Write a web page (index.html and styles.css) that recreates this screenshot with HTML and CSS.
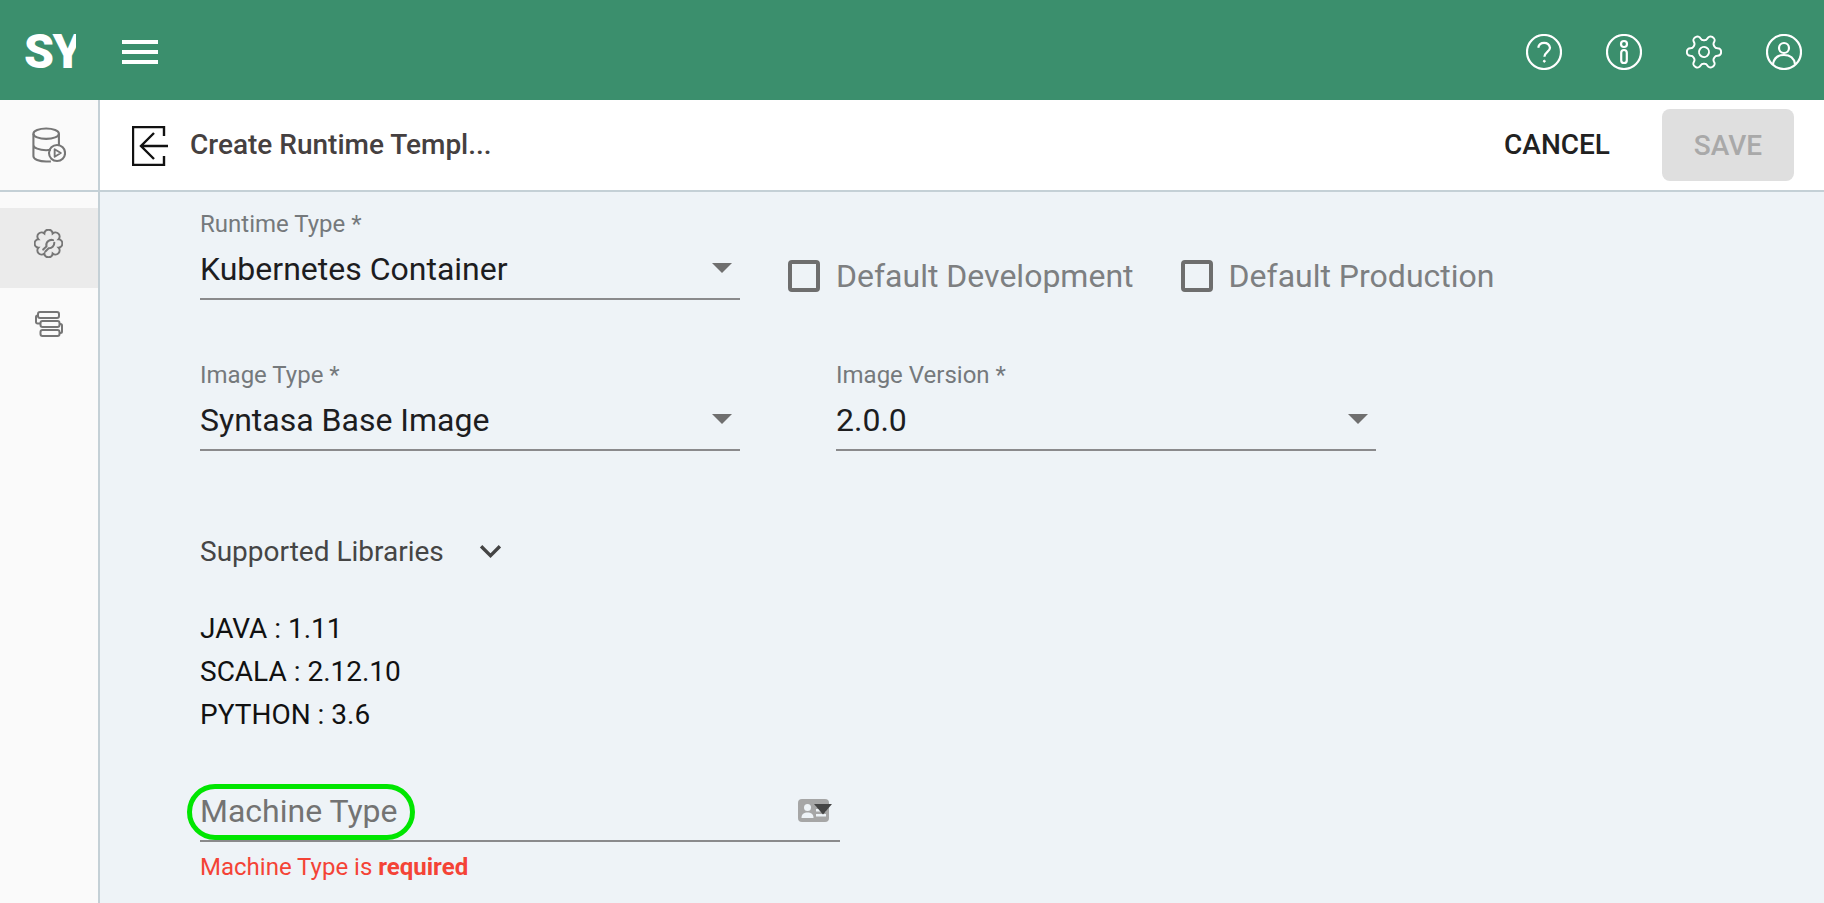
FILE: index.html
```html
<!DOCTYPE html>
<html lang="en">
<head>
<meta charset="utf-8">
<title>Create Runtime Template</title>
<link rel="stylesheet" href="styles.css">
</head>
<body>
<div class="app">
  <header class="topnav">
    <div class="brand"><span class="logo">SY</span></div>
    <button class="burger" aria-label="Menu"><i></i><i></i><i></i></button>
    <div class="topnav-icons">
      <svg class="nav-icon" viewBox="0 0 36 36"><circle cx="18" cy="18" r="17"/><path d="M12.200 13.800a6 6 0 0 1 11.800 0c0 3.800-5.600 4.600-5.600 9"/><circle class="dot" cx="18.300" cy="27.200" r="1"/></svg>
      <svg class="nav-icon" viewBox="0 0 36 36"><circle cx="18" cy="18" r="17"/><circle cx="18" cy="10" r="3"/><rect x="15.200" y="16" width="5.600" height="13" rx="2.800"/></svg>
      <svg class="nav-icon" viewBox="1.500 1.500 21 21"><g class="thin" transform="rotate(30 12 12)"><path d="M12.220 2h-.44a2 2 0 0 0-2 2v.18a2 2 0 0 1-1 1.730l-.43.25a2 2 0 0 1-2 0l-.15-.08a2 2 0 0 0-2.730.73l-.22.38a2 2 0 0 0 .73 2.730l.15.1a2 2 0 0 1 1 1.720v.51a2 2 0 0 1-1 1.740l-.15.09a2 2 0 0 0-.73 2.730l.22.38a2 2 0 0 0 2.730.73l.15-.08a2 2 0 0 1 2 0l.43.25a2 2 0 0 1 1 1.730V20a2 2 0 0 0 2 2h.44a2 2 0 0 0 2-2v-.18a2 2 0 0 1 1-1.730l.43-.25a2 2 0 0 1 2 0l.15.08a2 2 0 0 0 2.730-.73l.22-.39a2 2 0 0 0-.73-2.730l-.15-.08a2 2 0 0 1-1-1.740v-.5a2 2 0 0 1 1-1.740l.15-.09a2 2 0 0 0 .73-2.730l-.22-.38a2 2 0 0 0-2.730-.73l-.15.08a2 2 0 0 1-2 0l-.43-.25a2 2 0 0 1-1-1.730V4a2 2 0 0 0-2-2z"/><circle cx="12" cy="12" r="2.900"/></g></svg>
      <svg class="nav-icon" viewBox="0 0 36 36"><circle cx="18" cy="18" r="17"/><circle cx="18" cy="14" r="5"/><path d="M7 30c1-6 5-9 11-9s10 3 11 9"/></svg>
    </div>
  </header>
  <div class="workspace">
    <aside class="side">
      <div class="side-top">
        <svg class="db-icon" viewBox="0 0 36 38"><ellipse cx="15" cy="7" rx="13.500" ry="5.500"/><path d="M1.500 7v24c0 3 6 5.500 13.500 5.500h5M28.500 7v12M1.500 19c0 3 6 5.500 13.500 5.500 2 0 3.500-.2 5-.5"/><circle cx="26.500" cy="27.500" r="8.500"/><path class="play" d="M24 23.500l6.500 4-6.500 4z"/></svg>
      </div>
      <div class="side-item side-item-active">
        <svg class="tool-icon" viewBox="0 0 24 24"><path d="M20.310 8.560A3.450 3.450 0 0 1 20.310 15.440A3.450 3.450 0 0 1 15.440 20.310A3.450 3.450 0 0 1 8.560 20.310A3.450 3.450 0 0 1 3.690 15.440A3.450 3.450 0 0 1 3.690 8.560A3.450 3.450 0 0 1 8.560 3.690A3.450 3.450 0 0 1 15.440 3.690A3.450 3.450 0 0 1 20.310 8.560Z"/><path class="wrench" d="M15.800 9.200a4.400 4.400 0 0 0-5.500 5.200L7.600 17M16.800 11.300a4.400 4.400 0 0 1-4.700 4.600L9.400 18.600"/></svg>
      </div>
      <div class="side-item">
        <svg class="flow-icon" viewBox="0 0 28 26"><rect x="3" y="1" width="21" height="6" rx="2"/><rect x="5.500" y="10" width="19" height="6" rx="2"/><rect x="5.500" y="19" width="19" height="6" rx="2"/><path d="M3 4.500H2.500a1.500 1.500 0 0 0-1.500 1.500v5a1.500 1.500 0 0 0 1.500 1.500H5.500M24.500 13h1a1.500 1.500 0 0 1 1.500 1.500v6a1.500 1.500 0 0 1-1.500 1.500h-1"/></svg>
      </div>
    </aside>
    <main class="main">
      <div class="toolbar">
        <svg class="back-icon" viewBox="0 0 36 40"><path d="M32 10V1H1v38h31v-9"/><path d="M36 20H10M22 7L9 20l13 13"/></svg>
        <h1 class="title">Create Runtime Templ...</h1>
        <button class="btn btn-text">CANCEL</button>
        <button class="btn btn-save" disabled>SAVE</button>
      </div>
      <div class="content">
        <div class="row row-first">
          <div class="field">
            <span class="field-label">Runtime Type *</span>
            <div class="field-control"><span class="field-value">Kubernetes Container</span><i class="caret"></i></div>
          </div>
          <div class="checks">
            <label class="check"><span class="box"></span>Default Development</label>
            <label class="check"><span class="box"></span>Default Production</label>
          </div>
        </div>
        <div class="row row-second">
          <div class="field">
            <span class="field-label">Image Type *</span>
            <div class="field-control"><span class="field-value">Syntasa Base Image</span><i class="caret"></i></div>
          </div>
          <div class="field">
            <span class="field-label">Image Version *</span>
            <div class="field-control"><span class="field-value">2.0.0</span><i class="caret"></i></div>
          </div>
        </div>
        <div class="libs-head">
          <span>Supported Libraries</span>
          <svg class="chevron" viewBox="0 0 22 14"><path d="M2 2l9 9 9-9"/></svg>
        </div>
        <ul class="libs">
          <li>JAVA : 1.11</li>
          <li>SCALA : 2.12.10</li>
          <li>PYTHON : 3.6</li>
        </ul>
        <div class="machine">
          <div class="machine-control">
            <span class="machine-placeholder">Machine Type</span>
            <span class="highlight"></span>
            <svg class="card-icon" viewBox="0 0 32 24"><rect width="31" height="23" rx="4" class="card"/><circle cx="9.500" cy="8.500" r="3.500" class="cut"/><path class="cut" d="M3.500 19c0-4 2.500-5.500 6-5.500s6 1.500 6 5.500z"/><path class="cut" d="M18 5h10v2.500H18zM18 10h10v2.500H18zM18 15h10v2.500H18z"/><path class="arrow" d="M16 5h18l-9 10.500z"/></svg>
          </div>
          <p class="error">Machine Type is <b>required</b></p>
        </div>
      </div>
    </main>
  </div>
</div>
</body>
</html>
```
FILE: styles.css
```css
* { box-sizing: border-box; }
html, body { margin: 0; height: 100%; overflow: hidden; }
body { font-family: Roboto, "Liberation Sans", sans-serif; color: #1d1d1f; }
.app { display: flex; flex-direction: column; height: 903px; }

.topnav { flex: 0 0 100px; display: flex; align-items: center; background: #3b8f6d; color: #fff; padding: 4px 22px 0 0; }
.brand { width: 122px; padding-left: 24px; }
.logo { display: block; width: 52px; height: 42px; overflow: hidden; font-size: 48px; line-height: 42px; font-weight: 900; letter-spacing: -1.500px; white-space: nowrap; }
.burger { display: flex; flex-direction: column; gap: 6px; width: 36px; padding: 0; border: 0; background: none; }
.burger i { display: block; height: 4px; background: #fff; }
.topnav-icons { margin-left: auto; display: flex; gap: 44px; }
.nav-icon { width: 36px; height: 36px; fill: none; stroke: #fff; stroke-width: 2.200; display: block; }
.nav-icon .dot { fill: #fff; stroke-width: 1; }
.nav-icon .thin { stroke-width: 1.150; }

.workspace { flex: 1; display: flex; min-height: 0; }
.side { flex: 0 0 100px; background: #fafafa; border-right: 2px solid #c4d0d6; }
.side-top { height: 92px; border-bottom: 2px solid #c4d0d6; margin-right: -2px; display: flex; align-items: center; justify-content: center; padding-right: 2px; margin-bottom: 16px; }
.side-item { height: 80px; display: flex; align-items: center; justify-content: center; }
.side-item-active { background: #ebebeb; }
.db-icon { width: 34px; height: 36px; fill: none; stroke: #767676; stroke-width: 2.200; }
.db-icon .play { stroke-width: 2; stroke-linejoin: round; }
.tool-icon { width: 29px; height: 29px; fill: none; stroke: #767676; stroke-width: 1.700; stroke-linecap: round; margin-top: -10px; margin-right: 2px; }
.tool-icon .wrench { stroke-width: 1.700; }
.flow-icon { width: 28px; height: 26px; fill: none; stroke: #767676; stroke-width: 2; margin-top: -8px; }

.main { flex: 1; display: flex; flex-direction: column; min-width: 0; background: #eef3f7; }
.toolbar { flex: 0 0 92px; display: flex; align-items: center; background: #fff; border-bottom: 2px solid #c4d0d6; padding: 0 30px 0 32px; }
.back-icon { width: 36px; height: 40px; fill: none; stroke: #111; stroke-width: 2.400; margin-top: 2px; }
.title { margin: -2px 0 0 22px; font-size: 28px; font-weight: 500; color: #454040; }
.btn { border: 0; background: none; font-family: inherit; font-size: 28px; font-weight: 500; padding: 0; }
.btn-text { margin: -2px 52px 0 auto; color: #212121; }
.btn-save { width: 132px; height: 72px; background: #dfdfdf; color: #a9a9a9; border-radius: 8px; }

.content { padding: 16px 0 0 100px; }
.row { display: flex; align-items: flex-start; }
.row-second { margin-top: 59px; gap: 96px; }
.field { width: 540px; display: flex; flex-direction: column; }
.field-label { font-size: 24px; line-height: 32px; color: #75797c; }
.field-control { height: 60px; border-bottom: 2px solid #8a8a8c; display: flex; align-items: center; justify-content: space-between; padding-right: 8px; }
.field-value { font-size: 32px; }
.caret { width: 0; height: 0; border-left: 10.500px solid transparent; border-right: 10.500px solid transparent; border-top: 10px solid #6f6f6f; margin-top: -2px; }

.checks { display: flex; gap: 47px; margin: 52px 0 0 48px; }
.check { display: flex; align-items: center; gap: 16px; font-size: 32px; line-height: 32px; color: #7d7f81; }
.box { width: 32px; height: 32px; border: 4px solid #6e6e6e; border-radius: 4px; }

.libs-head { display: flex; align-items: center; height: 40px; margin-top: 80px; font-size: 28px; color: #454545; }
.chevron { width: 23px; height: 15px; margin-left: 35px; fill: none; stroke: #444; stroke-width: 3.200; }
.libs { list-style: none; margin: 36px 0 0; padding: 0; font-size: 28px; line-height: 43px; color: #111; }

.machine { margin-top: 44px; width: 640px; }
.machine-control { position: relative; height: 62px; border-bottom: 2px solid #8a8a8c; display: flex; align-items: center; justify-content: space-between; padding: 2px 9px 0 0; }
.machine-placeholder { font-size: 32px; color: #737373; }
.highlight { position: absolute; left: -13px; top: 4px; width: 228px; height: 56px; border: 5px solid #00e600; border-radius: 28px; }
.card-icon { width: 34px; height: 24px; overflow: visible; }
.card { fill: #a6a6a6; }
.cut { fill: #eef3f7; }
.arrow { fill: #454545; }
.error { margin: 10px 0 0; font-size: 24px; line-height: 30px; color: #f44336; }
.error b { font-weight: 700; }
```
